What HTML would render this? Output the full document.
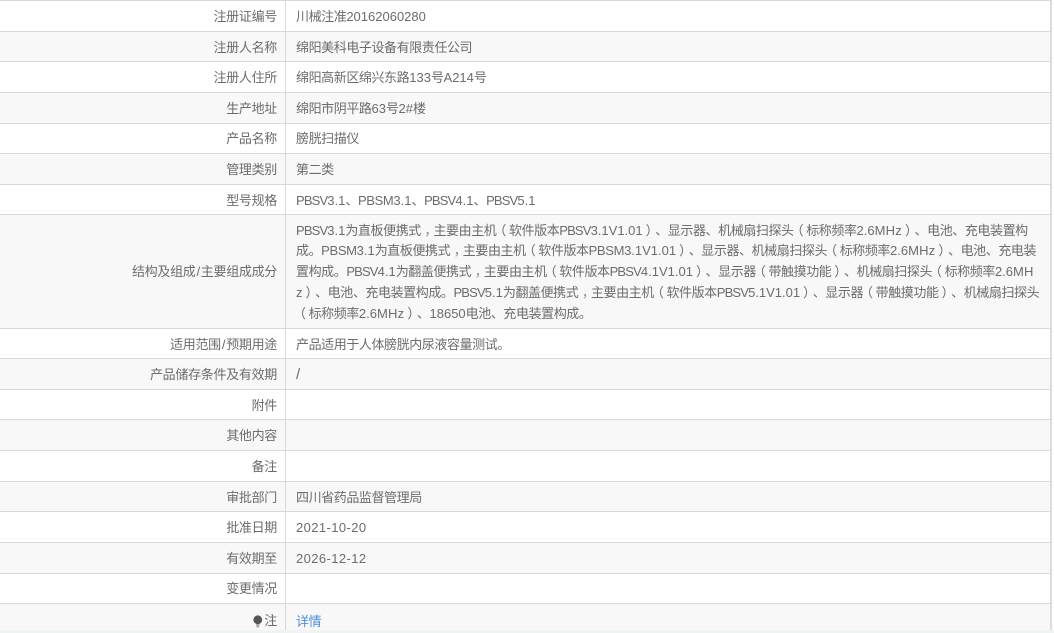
<!DOCTYPE html>
<html lang="zh-CN"><head><meta charset="utf-8">
<style>
html,body{margin:0;padding:0;background:#fff;width:1054px;height:633px;overflow:hidden}
body{font:13px/20px "Liberation Sans","Noto Sans CJK SC",sans-serif;color:#6a6c6e;text-spacing-trim:space-all}
#t{position:absolute;left:0;top:0;width:1050px;height:630px;border-right:2px solid #dcdcdc;box-sizing:content-box}
.r{position:absolute;left:0;width:1050px;border-top:1px solid #d8d8d8;box-sizing:border-box}
.g{background:#f8f8f8}
.l{position:absolute;right:773px;top:6px;white-space:nowrap;letter-spacing:-.3px}
.v{position:absolute;left:296px;top:6px;white-space:nowrap;letter-spacing:-.42px}
.s{position:absolute;left:285px;top:0;bottom:0;width:1px;background:#d8d8d8}
.m div{height:20.8px;line-height:20.8px}
.d{letter-spacing:0}
.c{letter-spacing:-.85px}
.cm{letter-spacing:-.35px}
.h{letter-spacing:.2px}
.o,.e,.k{font-style:normal;position:relative}
.o{left:-3px}
.e{left:3px}
.k{left:3.5px;color:#8a8c8e}
.sl{margin:0 1px}
a{color:#4a90d9;text-decoration:none}
</style></head><body>
<div id="t">
<div class="r" style="top:0;height:31px"><i class="s"></i><span class="l">注册证编号</span><span class="v">川械注准<span class="d">20162060280</span></span></div>
<div class="r g" style="top:31px;height:30px"><i class="s"></i><span class="l">注册人名称</span><span class="v">绵阳美科电子设备有限责任公司</span></div>
<div class="r" style="top:61px;height:31px"><i class="s"></i><span class="l">注册人住所</span><span class="v">绵阳高新区绵兴东路<span class="d">133</span>号<span class="d">A214</span>号</span></div>
<div class="r g" style="top:92px;height:31px"><i class="s"></i><span class="l">生产地址</span><span class="v">绵阳市阴平路<span class="d">63</span>号<span class="d">2#</span>楼</span></div>
<div class="r" style="top:123px;height:30px"><i class="s"></i><span class="l" style="top:5px">产品名称</span><span class="v" style="top:5px">膀胱扫描仪</span></div>
<div class="r g" style="top:153px;height:31px"><i class="s"></i><span class="l">管理类别</span><span class="v">第二类</span></div>
<div class="r" style="top:184px;height:30px"><i class="s"></i><span class="l">型号规格</span><span class="v"><span class="c">PBSV</span><span class="d">3.1</span>、<span class="cm">PBSM</span><span class="d">3.1</span>、<span class="c">PBSV</span><span class="d">4.1</span>、<span class="c">PBSV</span><span class="d">5.1</span></span></div>
<div class="r g" style="top:214px;height:114px"><i class="s"></i><span class="l" style="top:47px">结构及组成<span class="sl">/</span>主要组成成分</span>
<div class="v m" style="top:5.5px">
<div><span class="c">PBSV</span><span class="d">3.1</span>为直板便携式<i class="k">，</i>主要由主机<i class="o">（</i>软件版本<span class="c">PBSV</span><span class="d">3.1V1.01</span><i class="e">）</i>、显示器、机械扇扫探头<i class="o">（</i>标称频率<span class="d">2.6</span><span class="h">MHz</span><i class="e">）</i>、电池、充电装置构</div>
<div>成。<span class="cm">PBSM</span><span class="d">3.1</span>为直板便携式<i class="k">，</i>主要由主机<i class="o">（</i>软件版本<span class="cm">PBSM</span><span class="d">3.1V1.01</span><i class="e">）</i>、显示器、机械扇扫探头<i class="o">（</i>标称频率<span class="d">2.6</span><span class="h">MHz</span><i class="e">）</i>、电池、充电装</div>
<div>置构成。<span class="c">PBSV</span><span class="d">4.1</span>为翻盖便携式<i class="k">，</i>主要由主机<i class="o">（</i>软件版本<span class="c">PBSV</span><span class="d">4.1V1.01</span><i class="e">）</i>、显示器<i class="o">（</i>带触摸功能<i class="e">）</i>、机械扇扫探头<i class="o">（</i>标称频率<span class="d">2.6</span><span class="h">MH</span></div>
<div><span class="d">z</span><i class="e">）</i>、电池、充电装置构成。<span class="c">PBSV</span><span class="d">5.1</span>为翻盖便携式<i class="k">，</i>主要由主机<i class="o">（</i>软件版本<span class="c">PBSV</span><span class="d">5.1V1.01</span><i class="e">）</i>、显示器<i class="o">（</i>带触摸功能<i class="e">）</i>、机械扇扫探头</div>
<div><i class="o">（</i>标称频率<span class="d">2.6</span><span class="h">MHz</span><i class="e">）</i>、<span class="d">18650</span>电池、充电装置构成。</div>
</div></div>
<div class="r" style="top:328px;height:30px"><i class="s"></i><span class="l">适用范围<span class="sl">/</span>预期用途</span><span class="v">产品适用于人体膀胱内尿液容量测试。</span></div>
<div class="r g" style="top:358px;height:31px"><i class="s"></i><span class="l">产品储存条件及有效期</span><span class="v" style="font-size:15px">/</span></div>
<div class="r" style="top:389px;height:30px"><i class="s"></i><span class="l">附件</span></div>
<div class="r g" style="top:419px;height:31px"><i class="s"></i><span class="l">其他内容</span></div>
<div class="r" style="top:450px;height:31px"><i class="s"></i><span class="l">备注</span></div>
<div class="r g" style="top:481px;height:30px"><i class="s"></i><span class="l">审批部门</span><span class="v">四川省药品监督管理局</span></div>
<div class="r" style="top:511px;height:31px"><i class="s"></i><span class="l">批准日期</span><span class="v" style="letter-spacing:.4px">2021-10-20</span></div>
<div class="r g" style="top:542px;height:31px"><i class="s"></i><span class="l">有效期至</span><span class="v" style="letter-spacing:.4px">2026-12-12</span></div>
<div class="r" style="top:573px;height:30px"><i class="s"></i><span class="l" style="top:5px">变更情况</span></div>
<div class="r g" style="top:603px;height:27px"><i class="s"></i>
<svg style="position:absolute;left:253px;top:11px" width="10" height="13" viewBox="0 0 10 13"><circle cx="4.8" cy="4.8" r="4.4" fill="#555"/><path d="M3 9.5h3.6v1H3zM3.6 11.2h2.4v1H3.6z" fill="#777"/></svg>
<span class="l" style="top:7px">注</span><span class="v" style="top:8px"><a href="#">详情</a></span></div>
</div>
<div style="position:absolute;left:0;top:630px;width:1054px;height:3px;background:#f0f3f4"></div>
</body></html>
